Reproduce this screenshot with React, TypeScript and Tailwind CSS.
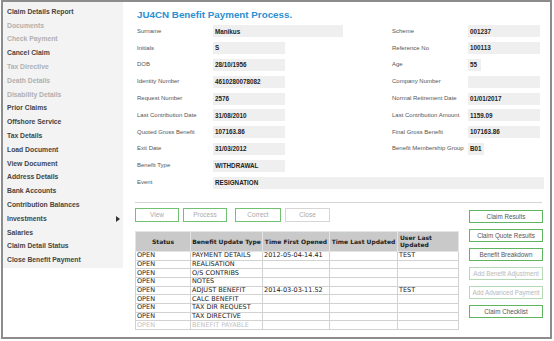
import React from 'react';

const menu: { label: string; on: boolean; arrow?: boolean }[] = [
  { label: 'Claim Details Report', on: true },
  { label: 'Documents', on: false },
  { label: 'Check Payment', on: false },
  { label: 'Cancel Claim', on: true },
  { label: 'Tax Directive', on: false },
  { label: 'Death Details', on: false },
  { label: 'Disability Details', on: false },
  { label: 'Prior Claims', on: true },
  { label: 'Offshore Service', on: true },
  { label: 'Tax Details', on: true },
  { label: 'Load Document', on: true },
  { label: 'View Document', on: true },
  { label: 'Address Details', on: true },
  { label: 'Bank Accounts', on: true },
  { label: 'Contribution Balances', on: true },
  { label: 'Investments', on: true, arrow: true },
  { label: 'Salaries', on: true },
  { label: 'Claim Detail Status', on: true },
  { label: 'Close Benefit Payment', on: true },
];

// [label, value, box width] pairs for the two columns
const leftFields: [string, string, string][] = [
  ['Surname', 'Manikus', 'w-[130px]'],
  ['Initials', 'S', 'w-[72px]'],
  ['DOB', '28/10/1956', 'w-[72px]'],
  ['Identity Number', '4610280078082', 'w-[72px]'],
  ['Request Number', '2576', 'w-[72px]'],
  ['Last Contribution Date', '31/08/2010', 'w-[72px]'],
  ['Quoted Gross Benefit', '107163.86', 'w-[72px]'],
  ['Exit Date', '31/03/2012', 'w-[72px]'],
  ['Benefit Type', 'WITHDRAWAL', 'w-[72px]'],
];

const rightFields: [string, string, string][] = [
  ['Scheme', '001237', 'w-[72px]'],
  ['Reference No', '100113', 'w-[72px]'],
  ['Age', '55', 'w-[13px]'],
  ['Company Number', '', 'w-[72px]'],
  ['Normal Retirement Date', '01/01/2017', 'w-[72px]'],
  ['Last Contribution Amount', '1159.09', 'w-[72px]'],
  ['Final Gross Benefit', '107163.86', 'w-[72px]'],
  ['Benefit Membership Group', 'B01', 'w-[16px]'],
];

const rows = [
  ['OPEN', 'PAYMENT DETAILS', '2012-05-04-14.41', '', 'TEST'],
  ['OPEN', 'REALISATION', '', '', ''],
  ['OPEN', 'O/S CONTRIBS', '', '', ''],
  ['OPEN', 'NOTES', '', '', ''],
  ['OPEN', 'ADJUST BENEFIT', '2014-03-03-11.52', '', 'TEST'],
  ['OPEN', 'CALC BENEFIT', '', '', ''],
  ['OPEN', 'TAX DIR REQUEST', '', '', ''],
  ['OPEN', 'TAX DIRECTIVE', '', '', ''],
  ['OPEN', 'BENEFIT PAYABLE', '', '', ''],
];

const sideButtons = [
  { label: 'Claim Results', on: true },
  { label: 'Claim Quote Results', on: true },
  { label: 'Benefit Breakdown', on: true },
  { label: 'Add Benefit Adjustment', on: false },
  { label: 'Add Advanced Payment', on: false },
  { label: 'Claim Checklist', on: true },
];

function Field({ label, value, box }: { label: string; value: string; box: string }) {
  return (
    <div className="flex items-center h-[16.8px]">
      <div className="w-[76px] text-[6px] text-[#555]">{label}</div>
      <div className={`${box} h-[12px] bg-[#efefef] flex items-center pl-[2px] text-[6.3px] font-bold text-[#222]`}>
        {value}
      </div>
    </div>
  );
}

export default function App() {
  return (
    <div className="w-[554px] h-[341px] bg-white" style={{ fontFamily: '"Liberation Sans", Arial, sans-serif' }}>
      <div className="ml-[1px] w-[551px] h-[339px] border-2 border-[#8c8c8c] flex">
        {/* Sidebar menu */}
        <div className="w-[120px] shrink-0">
          <div className="bg-[#f3f3f3] pt-[3px] pb-[2px] h-[266px]">
            {menu.map((m) => (
              <div
                key={m.label}
                className={`h-[13.8px] flex items-center pl-[4px] pr-[3px] text-[6.8px] font-bold ${m.on ? 'text-[#454545]' : 'text-[#b0b0b0]'}`}
              >
                <span className="flex-1">{m.label}</span>
                {m.arrow && (
                  <svg width="4" height="6" viewBox="0 0 4 6">
                    <path d="M0 0 L4 3 L0 6 Z" fill="#333" />
                  </svg>
                )}
              </div>
            ))}
          </div>
        </div>

        {/* Main content */}
        <div className="flex-1 pl-[12px] pr-[4px] pt-[6px]">
          <div className="pl-[2px] text-[9.8px] font-bold text-[#2b8fd2] h-[15px]">JU4CN Benefit Payment Process.</div>

          <div className="flex pl-[2px]">
            <div className="w-[255px]">
              {leftFields.map(([l, v, b]) => (
                <Field key={l} label={l} value={v} box={b} />
              ))}
            </div>
            <div className="flex-1">
              {rightFields.map(([l, v, b]) => (
                <Field key={l} label={l} value={v} box={b} />
              ))}
            </div>
          </div>
          <div className="flex items-center h-[16.8px] pl-[2px]">
            <div className="w-[76px] text-[6px] text-[#555]">Event</div>
            <div className="flex-1 mr-[2px] h-[12px] bg-[#efefef] flex items-center pl-[2px] text-[6.3px] font-bold text-[#222]">
              RESIGNATION
            </div>
          </div>

          <div className="mt-[11px] mr-[4px] border-t border-[#d4d4d4]" />

          <div className="flex">
            <div className="w-[336px]">
              <div className="flex gap-[4px] mt-[5px] text-[6.5px] text-[#aaa]">
                <div className="w-[44px] h-[14px] border border-[#72c072] flex items-center justify-center">View</div>
                <div className="w-[44px] h-[14px] border border-[#72c072] flex items-center justify-center">Process</div>
                <div className="w-[46px] h-[14px] border border-[#72c072] flex items-center justify-center ml-[4px]">Correct</div>
                <div className="w-[45px] h-[14px] border border-[#d6d6d6] flex items-center justify-center">Close</div>
              </div>

              <table
                className="mt-[9px] w-[323px] border-collapse table-fixed"
                style={{ fontFamily: '"DejaVu Sans", Verdana, sans-serif' }}
              >
                <colgroup>
                  <col className="w-[55px]" />
                  <col className="w-[72px]" />
                  <col className="w-[67px]" />
                  <col className="w-[68px]" />
                  <col className="w-[61px]" />
                </colgroup>
                <thead>
                  <tr className="bg-[#c9c9c9] h-[20px] text-[6px] font-bold text-[#222]">
                    <th className="border border-[#e4e4e4] text-center font-bold">Status</th>
                    <th className="border border-[#e4e4e4] text-center font-bold">Benefit Update Type</th>
                    <th className="border border-[#e4e4e4] text-center font-bold">Time First Opened</th>
                    <th className="border border-[#e4e4e4] text-center font-bold">Time Last Updated</th>
                    <th className="border border-[#e4e4e4] text-left pl-[2px] font-bold leading-[7px]">User Last Updated</th>
                  </tr>
                </thead>
                <tbody>
                  {rows.map((r, i) => (
                    <tr
                      key={i}
                      className={`h-[8.7px] text-[6.5px] leading-[7px] ${i === rows.length - 1 ? 'text-[#c2c2c2]' : 'text-[#222]'}`}
                    >
                      {r.map((c, j) => (
                        <td key={j} className="border border-[#d2d2d2] px-[1px] py-0 whitespace-nowrap overflow-hidden">
                          {c}
                        </td>
                      ))}
                    </tr>
                  ))}
                </tbody>
              </table>
            </div>

            <div className="flex flex-col gap-[6px] mt-[7px] ml-[-2px]">
              {sideButtons.map((b) => (
                <div
                  key={b.label}
                  className={`w-[74px] h-[13px] border flex items-center justify-center text-[6.3px] whitespace-nowrap ${
                    b.on ? 'border-[#5fb55f] text-[#555]' : 'border-[#b5d9b5] text-[#b8b8b8]'
                  }`}
                >
                  {b.label}
                </div>
              ))}
            </div>
          </div>
        </div>
      </div>
    </div>
  );
}
